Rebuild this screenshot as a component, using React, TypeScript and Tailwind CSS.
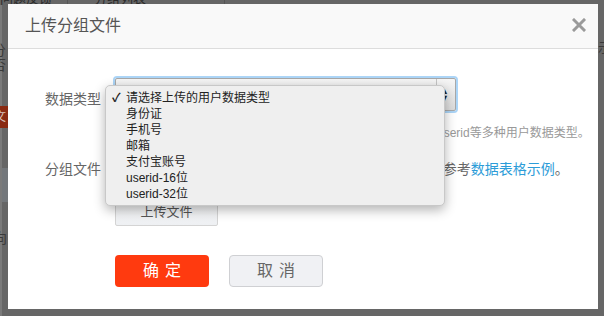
const cjk = { fontFamily: '"Liberation Sans", "Noto Sans CJK SC", sans-serif' };

const options = ['请选择上传的用户数据类型', '身份证', '手机号', '邮箱', '支付宝账号', 'userid-16位', 'userid-32位'];

export default function App() {
  return (
    <div className="relative w-[604px] h-[316px] overflow-hidden bg-[#666666]" style={cjk}>
      {/* dimmed page behind the dialog */}
      <div className="absolute left-0 top-0 w-[604px] h-[5px] flex text-[13px] leading-[5px] text-[#2b2b2b]">
        <div className="w-[68px] border-r border-[#555] overflow-hidden whitespace-nowrap -mt-[8px] leading-[14px]">问题反馈</div>
        <div className="w-[157px] border-r border-[#555] overflow-hidden whitespace-nowrap -mt-[8px] leading-[14px] pl-[26px]">分组列表</div>
      </div>
      <div className="absolute left-0 top-[5px] w-[2px] h-[311px] bg-[#7a7a7a]" />
      <div className="absolute left-0 top-[40px] text-[14px] text-[#3a3a3a] -ml-[8px]">分</div>
      <div className="absolute left-0 top-[55px] text-[14px] text-[#3a3a3a] -ml-[8px]">否</div>
      <div className="absolute left-0 top-[106px] w-[8px] h-[22px] bg-[#8a2a12] overflow-hidden text-[12px] text-[#d8c0b8] leading-[22px]">
        <span className="-ml-[6px]">文</span>
      </div>
      <div className="absolute left-[2px] top-[168px] w-[6px] h-[34px] bg-[#73777b]" />
      <div className="absolute left-0 top-[228px] text-[14px] text-[#3a3a3a] -ml-[7px]">向</div>
      <div className="absolute left-[598px] top-[38px] text-[13px] text-[#3a3a3a]">示</div>

      {/* dialog */}
      <div className="absolute left-[8px] top-[4px] w-[590px] h-[305px] bg-white flex flex-col">
        <div className="h-[45px] bg-[#f9f9f9] border-b border-[#dddddd] flex items-center justify-between pl-[17px] pr-[12px]">
          <span className="text-[16px] text-[#555]">上传分组文件</span>
          <svg width="14" height="14" viewBox="0 0 14 14" className="-mt-[2px]">
            <path d="M2 2 L12 12 M12 2 L2 12" stroke="#9a9a9a" strokeWidth="3" strokeLinecap="square" />
          </svg>
        </div>

        <div className="flex flex-col pl-[37px] pt-[27px]">
          <div className="flex items-center">
            <span className="w-[68px] text-[14px] text-[#666] mt-[10px]">数据类型</span>
            <div className="w-[345px] h-[37px] rounded-[4px] border-2 border-[#acd5f7] flex">
              <div className="flex-1 border border-[#a8a8a8] rounded-[2px] bg-gradient-to-b from-[#f6f6f6] to-[#dcdcdc] flex justify-end items-center pr-[3px]">
                <div className="h-full border-l border-[#c4c4c4] w-[16px] flex items-center justify-center text-[9px] leading-[7px] text-[#222] flex-col">
                  <span>▲</span>
                  <span>▼</span>
                </div>
              </div>
            </div>
          </div>
          <div className="pl-[68px] mt-[13px] text-[12px] leading-[14px] text-[#999] whitespace-nowrap">
            上传文件支持身份证号码、手机号、邮箱地址、支付宝账号、userid等多种用户数据类型。
          </div>

          <div className="flex items-center mt-[19px]">
            <span className="w-[68px] text-[14px] text-[#666]">分组文件</span>
            <span className="text-[14px] text-[#666] whitespace-nowrap">
              请上传txt或csv格式的文件，每行只填写一条数据，请参考<span className="text-[#2c9cd8]">数据表格示例</span>。
            </span>
          </div>

          <div className="pl-[70px] mt-[17px]">
            <div className="w-[103px] h-[29px] border border-[#d4d4d4] rounded-[2px] bg-gradient-to-b from-[#f8f8f8] to-[#eef0f3] flex items-center justify-center text-[13px] text-[#555]">
              上传文件
            </div>
          </div>

          <div className="flex pl-[70px] mt-[29px] gap-[20px]">
            <div className="w-[94px] h-[32px] rounded-[4px] bg-[#ff3a0f] flex items-center justify-center text-[16px] text-white tracking-[6px] pl-[6px]">
              确定
            </div>
            <div className="w-[94px] h-[32px] rounded-[4px] bg-[#f0f1f4] border border-[#cfd0d3] flex items-center justify-center text-[16px] text-[#666] tracking-[6px] pl-[6px]">
              取消
            </div>
          </div>
        </div>
      </div>

      {/* open native select menu */}
      <div className="absolute left-[105px] top-[85px] w-[340px] h-[121px] rounded-[5px] bg-[#efefef] border border-[#c8c8c8] shadow-[0_4px_12px_rgba(0,0,0,0.3)] pt-[4px]">
        {options.map((o, i) => (
          <div key={o} className="h-[16px] flex items-center text-[12px] text-[#222]">
            <span className="w-[20px] pl-[6px] text-[12px] font-bold">{i === 0 ? '✓' : ''}</span>
            <span>{o}</span>
          </div>
        ))}
      </div>
    </div>
  );
}
